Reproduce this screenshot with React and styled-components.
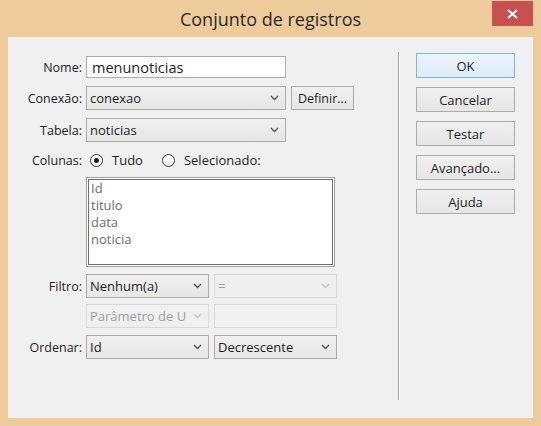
import React from 'react';
import styled, { createGlobalStyle } from 'styled-components';

const GlobalStyle = createGlobalStyle`
  html, body {
    margin: 0;
    padding: 0;
    background: #eecb9b;
  }
  body {
    font-family: "Open Sans", "Noto Sans", sans-serif;
    color: #1e1e1e;
  }
`;

const Window = styled.div`
  position: relative;
  width: 541px;
  height: 426px;
  background: #eecb9b;
  display: flex;
  flex-direction: column;
  box-sizing: border-box;
`;

const TitleBar = styled.div`
  height: 37px;
  display: flex;
  align-items: center;
  justify-content: center;
  font-size: 18px;
  color: #2b2b2b;
  box-sizing: border-box;
`;

const CloseButton = styled.div`
  position: absolute;
  top: 1px;
  right: 8px;
  width: 41px;
  height: 25px;
  background: #c75050;
  display: flex;
  align-items: center;
  justify-content: center;
`;

const Client = styled.div`
  flex: 1;
  margin: 0 8px 8px 8px;
  background: #f0f0f0;
  display: flex;
`;

const Form = styled.div`
  width: 390px;
  padding-top: 19px;
  display: flex;
  flex-direction: column;
  box-sizing: border-box;
`;

const Row = styled.div`
  display: flex;
  align-items: center;
  margin-top: ${(p) => p.$mt || 0}px;
  height: ${(p) => p.$h || 24}px;
`;

const Label = styled.div`
  width: 74px;
  text-align: right;
  font-size: 12.5px;
  margin-right: 4px;
  flex-shrink: 0;
  color: #1e1e1e;
`;

const TextInput = styled.div`
  width: ${(p) => p.$w}px;
  height: ${(p) => p.$h || 22}px;
  box-sizing: border-box;
  border: 1px solid ${(p) => (p.$disabled ? '#d9d9d9' : '#abadb3')};
  background: ${(p) => (p.$disabled ? '#f0f0f0' : '#fff')};
  font-size: 14.5px;
  padding-left: 5px;
  display: flex;
  align-items: center;
  margin-left: ${(p) => p.$ml || 0}px;
`;

const Combo = styled.div`
  width: ${(p) => p.$w}px;
  height: 24px;
  box-sizing: border-box;
  border: 1px solid ${(p) => (p.$disabled ? '#d9d9d9' : '#acacac')};
  background: ${(p) =>
    p.$disabled ? '#efefef' : 'linear-gradient(#f0f0f0, #e6e6e6)'};
  color: ${(p) => (p.$disabled ? '#9f9f9f' : '#1e1e1e')};
  font-size: 13px;
  padding-left: 3px;
  padding-right: 6px;
  display: flex;
  align-items: center;
  gap: 4px;
  margin-left: ${(p) => p.$ml || 0}px;
  white-space: nowrap;
  overflow: hidden;
`;

const ComboText = styled.span`
  flex: 1;
  overflow: hidden;
`;

const SmallButton = styled.div`
  width: 63px;
  height: 24px;
  box-sizing: border-box;
  border: 1px solid #acacac;
  background: linear-gradient(#f0f0f0, #e5e5e5);
  font-size: 12.5px;
  display: flex;
  align-items: center;
  justify-content: center;
  margin-left: 5px;
`;

const Radio = styled.span`
  width: 13px;
  height: 13px;
  box-sizing: border-box;
  border: 1px solid #333;
  border-radius: 50%;
  background: #fff;
  display: inline-flex;
  align-items: center;
  justify-content: center;
  margin-left: ${(p) => p.$ml || 0}px;
  flex-shrink: 0;
  &::after {
    content: '';
    width: 5px;
    height: 5px;
    border-radius: 50%;
    background: ${(p) => (p.$checked ? '#1a1a1a' : 'transparent')};
  }
`;

const RadioText = styled.span`
  font-size: 13px;
  margin-left: 9px;
`;

const ListBox = styled.div`
  margin-left: 78px;
  margin-top: 8px;
  width: 249px;
  height: 90px;
  box-sizing: border-box;
  border: 1px solid #a0a0a0;
  box-shadow: inset 0 0 0 1px #ffffff, inset 0 0 0 2px #6f6f6f;
  background: #fff;
  padding: 2px 4px;
  font-size: 13px;
  line-height: 17px;
  color: #6d6d6d;
`;

const Separator = styled.div`
  width: 1px;
  margin: 15px 0 18px 0;
  background: #a0a0a0;
  border-right: 1px solid #ffffff;
`;

const ButtonColumn = styled.div`
  padding-top: 16px;
  padding-left: 16px;
  display: flex;
  flex-direction: column;
  gap: 9px;
`;

const DialogButton = styled.div`
  width: 99px;
  height: 25px;
  box-sizing: border-box;
  border: 1px solid ${(p) => (p.$default ? '#7eb4ea' : '#acacac')};
  background: ${(p) =>
    p.$default ? 'linear-gradient(#ecf4fc, #dcecfc)' : 'linear-gradient(#f0f0f0, #e5e5e5)'};
  font-size: 13px;
  display: flex;
  align-items: center;
  justify-content: center;
`;

const Chevron = ({ color = '#555' }) => (
  <svg width="9" height="6" viewBox="0 0 9 6" style={{ flexShrink: 0 }}>
    <path d="M1 1 L4.5 4.5 L8 1" fill="none" stroke={color} strokeWidth="1.4" />
  </svg>
);

const Select = ({ w, ml, disabled, children }) => (
  <Combo $w={w} $ml={ml} $disabled={disabled}>
    <ComboText>{children}</ComboText>
    <Chevron color={disabled ? '#c4c4c4' : '#555'} />
  </Combo>
);

export default function App() {
  return (
    <>
      <GlobalStyle />
      <Window>
        <TitleBar>Conjunto de registros</TitleBar>
        <CloseButton>
          <svg width="11" height="10" viewBox="0 0 11 10">
            <path d="M1 1 L10 9 M10 1 L1 9" stroke="#fff" strokeWidth="2" />
          </svg>
        </CloseButton>
        <Client>
          <Form>
            <Row $h={22}>
              <Label>Nome:</Label>
              <TextInput $w={200}>menunoticias</TextInput>
            </Row>
            <Row $mt={8}>
              <Label>Conexão:</Label>
              <Select w={200}>conexao</Select>
              <SmallButton>Definir...</SmallButton>
            </Row>
            <Row $mt={8}>
              <Label>Tabela:</Label>
              <Select w={200}>noticias</Select>
            </Row>
            <Row $mt={9} $h={18}>
              <Label>Colunas:</Label>
              <Radio $checked $ml={4} />
              <RadioText>Tudo</RadioText>
              <Radio $ml={19} />
              <RadioText>Selecionado:</RadioText>
            </Row>
            <ListBox>
              <div>Id</div>
              <div>titulo</div>
              <div>data</div>
              <div>noticia</div>
            </ListBox>
            <Row $mt={7}>
              <Label>Filtro:</Label>
              <Select w={123}>Nenhum(a)</Select>
              <Select w={123} ml={5} disabled>=</Select>
            </Row>
            <Row $mt={6}>
              <Label />
              <Select w={123} disabled>Parâmetro de U</Select>
              <TextInput $w={123} $h={24} $ml={5} $disabled />
            </Row>
            <Row $mt={7}>
              <Label>Ordenar:</Label>
              <Select w={123}>Id</Select>
              <Select w={123} ml={5}>Decrescente</Select>
            </Row>
          </Form>
          <Separator />
          <ButtonColumn>
            <DialogButton $default>OK</DialogButton>
            <DialogButton>Cancelar</DialogButton>
            <DialogButton>Testar</DialogButton>
            <DialogButton>Avançado...</DialogButton>
            <DialogButton>Ajuda</DialogButton>
          </ButtonColumn>
        </Client>
      </Window>
    </>
  );
}
